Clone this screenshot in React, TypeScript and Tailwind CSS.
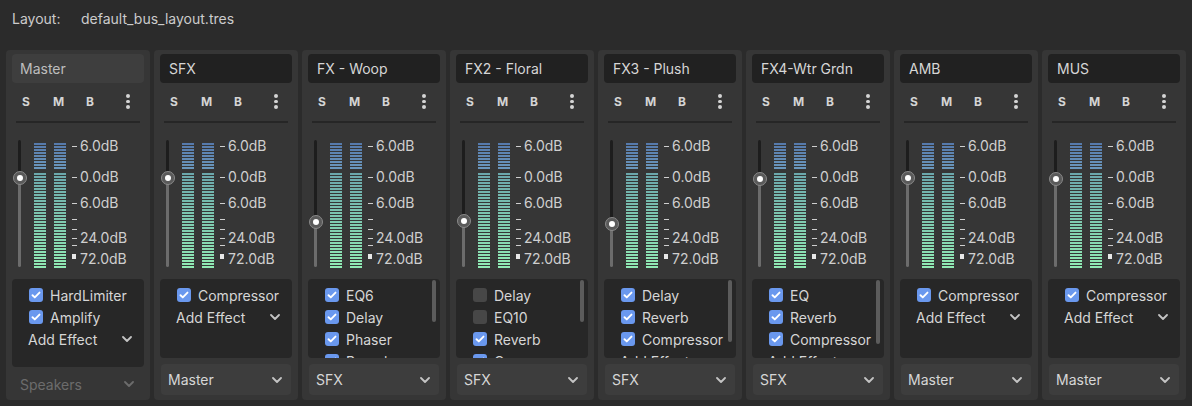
import React from 'react'

type Effect = { name: string; on: boolean }
type Bus = {
  name: string
  master?: boolean
  knob: number
  effects: Effect[]
  output: string
  scroll?: number
}

const buses: Bus[] = [
  {
    name: 'Master',
    master: true,
    knob: 39,
    effects: [
      { name: 'HardLimiter', on: true },
      { name: 'Amplify', on: true },
    ],
    output: 'Speakers',
  },
  { name: 'SFX', knob: 39, effects: [{ name: 'Compressor', on: true }], output: 'Master' },
  {
    name: 'FX - Woop',
    knob: 83,
    effects: [
      { name: 'EQ6', on: true },
      { name: 'Delay', on: true },
      { name: 'Phaser', on: true },
      { name: 'Reverb', on: true },
    ],
    output: 'SFX',
    scroll: 42,
  },
  {
    name: 'FX2 - Floral',
    knob: 82,
    effects: [
      { name: 'Delay', on: false },
      { name: 'EQ10', on: false },
      { name: 'Reverb', on: true },
      { name: 'Compressor', on: true },
    ],
    output: 'SFX',
    scroll: 42,
  },
  {
    name: 'FX3 - Plush',
    knob: 85,
    effects: [
      { name: 'Delay', on: true },
      { name: 'Reverb', on: true },
      { name: 'Compressor', on: true },
    ],
    output: 'SFX',
    scroll: 62,
  },
  {
    name: 'FX4-Wtr Grdn',
    knob: 40,
    effects: [
      { name: 'EQ', on: true },
      { name: 'Reverb', on: true },
      { name: 'Compressor', on: true },
    ],
    output: 'SFX',
    scroll: 64,
  },
  { name: 'AMB', knob: 39, effects: [{ name: 'Compressor', on: true }], output: 'Master' },
  { name: 'MUS', knob: 40, effects: [{ name: 'Compressor', on: true }], output: 'Master' },
]

const STRIPES = 42
const BLUE = 9

// colour of a meter stripe, blue at the top and mint towards the bottom
function stripeColor(i: number) {
  if (i < BLUE) {
    const t = i / (BLUE - 1)
    return `rgb(${Math.round(86 + 20 * t)}, ${Math.round(122 + 28 * t)}, ${Math.round(172 + 16 * t)})`
  }
  if (i === BLUE) return 'transparent'
  const t = (i - BLUE - 1) / (STRIPES - BLUE - 2)
  return `rgb(${Math.round(108 + 36 * t)}, ${Math.round(168 + 66 * t)}, ${Math.round(172 + 8 * t)})`
}

function Chevron({ className = 'text-[#c4c4c4]' }: { className?: string }) {
  return (
    <svg width="10" height="6" viewBox="0 0 10 6" className={className}>
      <path d="M1 1l4 4 4-4" fill="none" stroke="currentColor" strokeWidth="1.8" strokeLinecap="round" strokeLinejoin="round" />
    </svg>
  )
}

function Checkbox({ on }: { on: boolean }) {
  if (!on) return <div className="w-[14px] h-[14px] rounded-[3px] bg-[#474747]" />
  return (
    <div className="w-[14px] h-[14px] rounded-[3px] bg-[#6a98ee] flex items-center justify-center">
      <svg width="10" height="8" viewBox="0 0 10 8">
        <path d="M1.5 4.2l2.3 2.2L8.5 1.6" fill="none" stroke="white" strokeWidth="1.9" strokeLinecap="round" strokeLinejoin="round" />
      </svg>
    </div>
  )
}

function MeterBar() {
  return (
    <div className="w-[12px] flex flex-col gap-[1px] pt-[4px]">
      {Array.from({ length: STRIPES }).map((_, i) => (
        <div key={i} className="h-[2px]" style={{ background: stripeColor(i) }} />
      ))}
    </div>
  )
}

const scale = [
  { y: 7, label: '6.0dB' },
  { y: 38, label: '0.0dB' },
  { y: 64, label: '6.0dB' },
  { y: 80 },
  { y: 90 },
  { y: 99, label: '24.0dB' },
  { y: 106 },
]

function Meter({ knob }: { knob: number }) {
  return (
    <div className="h-[130px] flex">
      {/* volume slider */}
      <div className="relative w-[15px]">
        <div className="absolute left-[6px] w-[3px] top-[1px] rounded-full bg-[#1d1d1d]" style={{ height: knob }} />
        <div className="absolute left-[6px] w-[3px] bottom-[2px] rounded-full bg-[#6c6c6c]" style={{ top: knob }} />
        <div
          className="absolute left-[0.5px] w-[14px] h-[14px] rounded-full bg-[#5a5a5a] border border-[#8a8a8a] flex items-center justify-center"
          style={{ top: knob - 7 }}
        >
          <div className="w-[6px] h-[6px] rounded-full bg-white" />
        </div>
      </div>
      <div className="ml-[7px] flex gap-[8px]">
        <MeterBar />
        <MeterBar />
      </div>
      <div className="relative flex-1 ml-[6px] text-[14px] text-[#cfcfcf] leading-none">
        {scale.map((s, i) => (
          <React.Fragment key={i}>
            <div className="absolute left-0 w-[5px] h-[1px] bg-[#cfcfcf]" style={{ top: s.y }} />
            {s.label && (
              <div className="absolute left-[8px]" style={{ top: s.y - 7 }}>
                {s.label}
              </div>
            )}
          </React.Fragment>
        ))}
        <div className="absolute left-[0px] top-[115px] w-[4px] h-[5px] bg-[#e8e8e8]" />
        <div className="absolute left-[8px] top-[113px]">72.0dB</div>
      </div>
    </div>
  )
}

function BusPanel({ bus }: { bus: Bus }) {
  return (
    <div className="w-[144px] h-[350px] shrink-0 bg-[#363636] rounded-[4px] px-[6px] pt-[4px] flex flex-col">
      <div
        className={`h-[29px] rounded-[4px] flex items-center text-[14px] ${
          bus.master ? 'bg-[#3e3e3e] text-[#bdbdbd] pl-[8px]' : 'bg-[#212121] text-[#d6d6d6] pl-[9px]'
        }`}
      >
        {bus.name}
      </div>

      <div className="relative h-[26px] mt-[5px] text-[12px] font-bold text-[#d4d4d4]">
        <span className="absolute left-[10px] top-[5px]">S</span>
        <span className="absolute left-[41px] top-[5px]">M</span>
        <span className="absolute left-[74px] top-[5px]">B</span>
        <div className="absolute left-[114px] top-[6px] flex flex-col gap-[2px]">
          <div className="w-[3.5px] h-[3.5px] rounded-full bg-[#d4d4d4]" />
          <div className="w-[3.5px] h-[3.5px] rounded-full bg-[#d4d4d4]" />
          <div className="w-[3.5px] h-[3.5px] rounded-full bg-[#d4d4d4]" />
        </div>
      </div>

      <div className="mt-[7px] mx-[4px] h-[2px] bg-[#262626]" />

      <div className="mt-[16px]">
        <Meter knob={bus.knob} />
      </div>

      {/* effects */}
      <div
        className={`relative mt-[10px] rounded-[4px] bg-[#272727] overflow-hidden pt-[5px] text-[14px] text-[#d6d6d6] ${
          bus.master ? 'h-[88px]' : 'h-[79px]'
        }`}
      >
        {bus.effects.map((fx, i) => (
          <div key={i} className="h-[22px] flex items-center pl-[17px] gap-[7px]">
            <Checkbox on={fx.on} />
            <span>{fx.name}</span>
          </div>
        ))}
        {bus.effects.length < 4 && (
          <div className="h-[22px] flex items-center justify-between pl-[16px] pr-[12px]">
            <span>Add Effect</span>
            <Chevron />
          </div>
        )}
        {bus.scroll && (
          <div className="absolute right-[4px] top-[1px] w-[4px] rounded-full bg-[#5c5c5c]" style={{ height: bus.scroll }} />
        )}
      </div>

      {bus.master ? (
        <div className="mt-[4px] h-[26px] flex items-center justify-between pl-[8px] pr-[10px] text-[14px] text-[#6c6c6c]">
          <span>{bus.output}</span>
          <Chevron className="text-[#6c6c6c]" />
        </div>
      ) : (
        <div className="mt-[6px] mx-[1px] h-[31px] rounded-[4px] bg-[#3d3d3d] flex items-center justify-between pl-[7px] pr-[9px] text-[14px] text-[#d6d6d6]">
          <span>{bus.output}</span>
          <Chevron />
        </div>
      )}
    </div>
  )
}

export default function App() {
  return (
    <div className="w-[1192px] h-[406px] bg-[#2b2b2b] overflow-hidden" style={{ fontFamily: 'Inter, "Noto Sans", sans-serif' }}>
      <div className="h-[38px] flex items-center pl-[12px] pb-[1px] text-[14px] text-[#cccccc]">
        <span className="w-[69px]">Layout:</span>
        <span>default_bus_layout.tres</span>
      </div>
      <div className="mt-[12px] flex gap-[4px] pl-[6px]">
        {buses.map((bus) => (
          <BusPanel key={bus.name} bus={bus} />
        ))}
      </div>
    </div>
  )
}
